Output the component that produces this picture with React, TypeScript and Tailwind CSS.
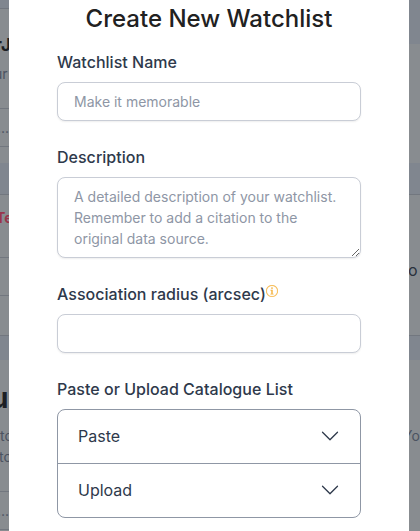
import type { ReactNode } from 'react';

const fieldClass =
  'block w-full rounded-lg border border-[#c9cdd6] bg-white px-4 py-2 text-[14px] leading-[21px] text-[#2d3748] shadow-[0_1px_2px_rgba(0,0,0,0.07)] outline-none placeholder:text-[#8e96a5] placeholder:opacity-100';

function Field({ label, children }: { label: ReactNode; children: ReactNode }) {
  return (
    <div>
      <div className="mb-2 h-6 whitespace-nowrap text-[16px] leading-6 font-medium tracking-[0.02px] text-[#2e394b]">{label}</div>
      {children}
    </div>
  );
}

function InfoIcon() {
  return (
    <svg width="12" height="12" viewBox="0 0 16 16" fill="#f5b544" className="mt-[3px]">
      <path d="M8 15A7 7 0 1 1 8 1a7 7 0 0 1 0 14zm0 1A8 8 0 1 0 8 0a8 8 0 0 0 0 16z" stroke="#f5b544" strokeWidth=".3" />
      <path d="M6 6.3h3v5.2h1.2v1.2H5.8v-1.2H7V7.5H6z" />
      <circle cx="8" cy="4.1" r="1.2" />
    </svg>
  );
}

function AccordionRow({ title }: { title: string }) {
  return (
    <button className="flex h-[53px] w-full items-center justify-between px-5 pb-0.5 text-[16px] leading-6 text-[#2e394b]">
      {title}
      <svg width="20" height="20" viewBox="0 0 16 16" fill="#2e394b">
        <path
          fillRule="evenodd"
          d="M1.646 4.646a.5.5 0 0 1 .708 0L8 10.293l5.646-5.647a.5.5 0 0 1 .708.708l-6 6a.5.5 0 0 1-.708 0l-6-6a.5.5 0 0 1 0-.708z"
        />
      </svg>
    </button>
  );
}

function LeftPage() {
  return (
    <div className="flex w-[9px] shrink-0 flex-col overflow-hidden whitespace-nowrap bg-[#80868f] text-[14px] text-[#4b5361]">
      <div className="mt-2 flex h-[155px] shrink-0 flex-col border-t border-[#72777f] bg-[#888c90]">
        <div className="h-[43px] pt-[24px] text-[17px] leading-6 font-bold text-[#1c1f24]">
          <span className="-ml-[5px]">r</span>
          <span>J</span>
        </div>
        <div className="h-[56px] pt-[11px] leading-[21px]">
          <span className="-ml-[6px]">ur</span>
        </div>
        <div className="h-[39px] border-y border-[#72777f] pt-[8px] leading-[21px]">
          <span className="-ml-[3px]">....</span>
        </div>
      </div>
      <div className="mt-[31px] h-[142px] shrink-0 border-y border-[#72777f] bg-[#888c90]">
        <div className="h-[62px] pt-[12px] text-[14px] leading-[21px] font-bold text-[#98354b]">
          <span className="-ml-[4px]">Te</span>
        </div>
        <div className="h-[39px] border-y border-[#72777f]" />
      </div>
      <div className="mt-6 h-[171px] shrink-0 bg-[#888c90]">
        <div className="h-[65px] pt-[20px] text-[28px] leading-9 font-bold text-[#1c1f24]">
          <span className="-ml-[9px]">u</span>
        </div>
        <div className="h-[66px] leading-[21px]">
          <div>to</div>
          <div className="-ml-px">to</div>
        </div>
        <div className="h-[39px] border-y border-[#72777f] pt-[8px] leading-[21px]">
          <span className="-ml-[3px]">....</span>
        </div>
      </div>
    </div>
  );
}

function RightPage() {
  return (
    <div className="w-[11px] shrink-0 overflow-hidden whitespace-nowrap bg-[#80868f]">
      <div className="mt-11 h-[119px] bg-[#888c90]" />
      <div className="mt-[31px] h-[142px] border-y border-[#72777f] bg-[#888c90] pt-[63px] text-[16px] leading-6 text-[#29313d]">
        <span className="-ml-px">o</span>
      </div>
      <div className="mt-6 h-[171px] bg-[#888c90] pt-[65px] text-[14px] leading-[21px] text-[#4b5361]">
        <span className="-ml-[6px]">Yo</span>
      </div>
    </div>
  );
}

export default function App() {
  return (
    <div className="flex h-[531px] w-[420px] overflow-hidden font-['Inter',sans-serif]">
      <LeftPage />
      <main className="w-[400px] shrink-0 bg-white px-12 pt-[3px]">
        <h1 className="mb-4 text-center text-[24px] leading-[31px] font-medium whitespace-nowrap text-[#212121]">
          Create New Watchlist
        </h1>
        <div className="flex flex-col gap-6">
          <Field label="Watchlist Name">
            <input className={fieldClass} placeholder="Make it memorable" />
          </Field>
          <Field label="Description">
            <textarea
              className={`${fieldClass} h-[81px] resize overflow-hidden`}
              placeholder="A detailed description of your watchlist. Remember to add a citation to the original data source."
            />
          </Field>
          <Field
            label={
              <span className="flex items-start">
                Association radius (arcsec)
                <InfoIcon />
              </span>
            }
          >
            <input className={fieldClass} />
          </Field>
          <Field label="Paste or Upload Catalogue List">
            <div className="rounded-lg border border-[#8f97a5]">
              <AccordionRow title="Paste" />
              <hr className="border-[#8f97a5]" />
              <AccordionRow title="Upload" />
            </div>
          </Field>
        </div>
      </main>
      <RightPage />
    </div>
  );
}
